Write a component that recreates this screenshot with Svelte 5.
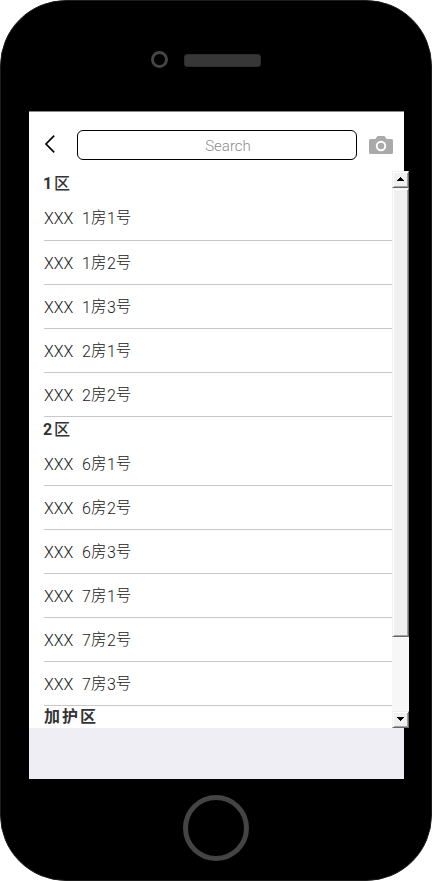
<script>
  const sections = [
    { digit: '1', title: '区', rooms: [['1', '1'], ['1', '2'], ['1', '3'], ['2', '1'], ['2', '2']] },
    { digit: '2', title: '区', rooms: [['6', '1'], ['6', '2'], ['6', '3'], ['7', '1'], ['7', '2'], ['7', '3']] },
    { digit: '', title: '加护区', rooms: [] }
  ];
</script>

<div class="phone">
  <div class="top">
    <span class="lens"></span>
    <span class="speaker"></span>
  </div>
  <div class="screen">
    <header>
      <svg class="back" width="12" height="20" viewBox="0 0 12 20"><path d="M10.2 1.7 2 10l8.2 8.3" fill="none" stroke="#000" stroke-width="1.7" /></svg>
      <input type="text" placeholder="Search" aria-label="Search" />
      <svg class="camera" width="24" height="19" viewBox="0 0 24 19">
        <path fill="#aaa" fill-rule="evenodd" d="M1.5 3H6.5L8 .6Q8.4 0 9 0H15Q15.600 0 16 .6L17.500 3H22.500Q24 3 24 4.500V16.500Q24 18 22.500 18H1.500Q0 18 0 16.500V4.500Q0 3 1.500 3ZM12 4.800a5.200 5.200 0 1 0 0 10.400a5.200 5.200 0 1 0 0-10.400Z" />
        <circle cx="12" cy="10" r="3.300" fill="#aaa" />
      </svg>
    </header>
    <div class="content">
      <div class="list">
        {#each sections as section}
          <h2>
            {#if section.digit}<span class="digit">{section.digit}</span>{/if}
            <span class:light={section.digit}>{section.title}</span>
          </h2>
          {#each section.rooms as [room, bed]}
            <div class="row"><span class="name">XXX</span><span>{room}</span><span class="han">房</span><span>{bed}</span><span class="han">号</span></div>
          {/each}
        {/each}
      </div>
      <div class="scrollbar">
        <div class="button"><svg width="9" height="5" viewBox="0 0 9 5"><path d="M4 0h1v1h1v1h1v1h1v1H1V3h1V2h1V1h1z" /></svg></div>
        <div class="thumb"></div>
        <div class="track"></div>
        <div class="button"><svg width="9" height="5" viewBox="0 0 9 5"><path d="M1 0h7v1H7v1H6v1H5v1H4V3H3V2H2V1H1z" /></svg></div>
      </div>
    </div>
  </div>
  <div class="bottom"><span class="home"></span></div>
</div>

<style>
  :global(body) { background: #fff; overflow: hidden; }
  .phone {
    width: 432px;
    height: 881px;
    box-sizing: border-box;
    border: 1px solid #1c1c1c;
    border-radius: 66px;
    background: #000;
    font-family: Roboto, "Noto Sans CJK SC", sans-serif;
    display: flex;
    flex-direction: column;
  }
  .top {
    height: 110px;
    flex: none;
    box-sizing: border-box;
    padding: 50px 0 0 150px;
    display: flex;
    align-items: flex-start;
  }
  .lens {
    width: 17px;
    height: 17px;
    box-sizing: border-box;
    border: 3px solid #444;
    border-radius: 50%;
  }
  .speaker {
    width: 77px;
    height: 13px;
    box-sizing: border-box;
    margin: 3px 0 0 16px;
    border: 1px solid #2c2c2c;
    border-radius: 3px;
    background: #373737;
  }
  .screen {
    width: 375px;
    height: 668px;
    flex: none;
    margin-left: 28px;
    background: #efeef4;
  }
  header {
    height: 60px;
    box-sizing: border-box;
    padding: 19px 0 0 15px;
    border-top: 1px solid #888;
    background: #fff;
    display: flex;
    align-items: flex-start;
  }
  .back { margin-top: 3px; }
  input {
    width: 280px;
    height: 30px;
    box-sizing: border-box;
    margin: -1px 0 0 21px;
    padding: 1px 0 0 22px;
    border: 1px solid #000;
    border-radius: 6px;
    background: #fff;
    font: 300 15px Roboto, sans-serif;
    text-align: center;
    outline: none;
  }
  input::placeholder { color: #8c8c8c; opacity: 1; }
  .camera { margin: 5px 0 0 12px; }
  .content {
    width: 380px;
    height: 557px;
    display: flex;
  }
  .list {
    width: 363px;
    height: 557px;
    overflow: hidden;
    background: #fff;
    padding-left: 15px;
    box-sizing: border-box;
  }
  h2 {
    height: 25px;
    margin: 0 0 0 -1px;
    display: flex;
    font-size: 16px;
    font-weight: 700;
    line-height: 25px;
    color: #333;
  }
  h2:first-child { height: 26px; line-height: 26px; }
  h2:last-child { margin-left: 0; line-height: 21px; letter-spacing: 2px; }
  .digit { width: 11px; }
  .light { font-weight: 500; }
  .row {
    height: 44px;
    box-sizing: border-box;
    border-bottom: 1px solid #c8c8c8;
    font-size: 16px;
    font-weight: 300;
    line-height: 45px;
    color: #222;
    display: flex;
  }
  h2:first-child + .row { line-height: 43px; }
  .name { width: 38px; }
  .han { width: 16px; font-size: 15.500px; }
  .scrollbar {
    width: 17px;
    height: 557px;
    background: #f7f7f7;
    display: flex;
    flex-direction: column;
  }
  .button, .thumb {
    box-sizing: border-box;
    border: 1px solid;
    border-color: #f0f0f0 #696969 #696969 #f0f0f0;
    box-shadow: inset 1px 1px #fff, inset -1px -1px #a0a0a0;
    background: #f0f0f0;
  }
  .button {
    height: 17px;
    display: flex;
    align-items: center;
    justify-content: center;
  }
  .thumb { height: 449px; }
  .track { flex: 1; }
  .bottom {
    flex: 1;
    display: flex;
    justify-content: center;
    padding-top: 16px;
  }
  .home {
    width: 66px;
    height: 66px;
    box-sizing: border-box;
    border: 5px solid #444;
    border-radius: 50%;
  }
</style>
